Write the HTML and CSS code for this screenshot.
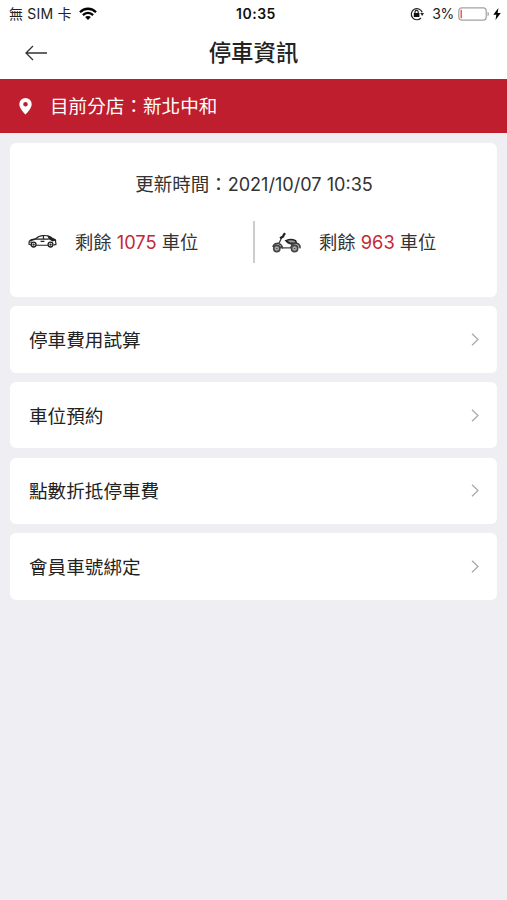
FILE: index.html
```html
<!DOCTYPE html>
<html lang="zh-Hant">
<head>
<meta charset="utf-8">
<meta name="viewport" content="width=device-width, initial-scale=1">
<title>停車資訊</title>
<link rel="stylesheet" href="styles.css">
</head>
<body>
<header class="top">
  <div class="status">
    <div class="status-left">
      <span>無 SIM 卡</span>
      <svg class="wifi" width="18" height="14" viewBox="0 0 18 14" fill="none" stroke="#000" stroke-width="2.3"><path d="M1 5.200C5.400.6 12.600.6 17 5.200M3.900 8.100c2.800-2.900 7.400-2.900 10.200 0"/><path d="M9 13 6.100 10.100c1.600-1.600 4.200-1.600 5.800 0Z" fill="#000" stroke="none"/></svg>
    </div>
    <time class="clock">10:35</time>
    <div class="status-right">
      <svg class="lock" width="14" height="14" viewBox="0 0 14 14" fill="none" stroke="#222"><path d="M12.200 5.300A5.600 5.600 0 1 0 11 11" stroke-width="1.200"/><path d="M10.200 6h3.800l-1.800 2.900Z" fill="#222" stroke="none"/><path d="M5 6.500V5a1.600 1.600 0 0 1 3.200 0v1.500" stroke-width="1.200"/><rect x="3.800" y="6" width="5.600" height="4.100" rx=".5" fill="#111" stroke="none"/></svg>
      <span class="percent">3%</span>
      <svg class="battery" width="32" height="14" viewBox="0 0 32 14"><rect x=".8" y=".8" width="27.400" height="12.400" rx="3" fill="#fff" stroke="#a2a2a2" stroke-width="1.200"/><path d="M3.200 2.800v8.400" stroke="#f0524b" stroke-width="1.400"/><path d="M29.600 4.500q2.400 2.500 0 5Z" fill="#888"/></svg>
      <svg class="bolt" width="8" height="12" viewBox="0 0 8 12"><path d="M5.400 0 .3 6.700h3L2.500 12 7.800 5H4.600Z" fill="#000"/></svg>
    </div>
  </div>
  <div class="nav">
    <svg class="back" width="22" height="16" viewBox="0 0 22 16" fill="none" stroke="#333" stroke-width="1.300"><path d="M8 1 1 8l7 7M1 8h21"/></svg>
    <h1>停車資訊</h1>
  </div>
</header>
<div class="branch">
  <svg class="pin" width="13" height="17" viewBox="0 0 13 17"><path fill="#fff" fill-rule="evenodd" d="M6.500 0A6.200 6.200 0 0 0 .3 6.300C.3 10.800 6.500 16.500 6.500 16.500s6.200-5.700 6.200-10.200A6.200 6.200 0 0 0 6.500 0Zm0 4a2.300 2.300 0 1 1 0 4.600 2.300 2.300 0 0 1 0-4.600Z"/></svg>
  <span>目前分店：新北中和</span>
</div>
<main>
  <section class="card info">
    <p class="updated">更新時間：<span>2021/10/07 10:35</span></p>
    <div class="spaces">
      <div class="space">
        <svg width="29" height="14" viewBox="0 0 30 14" fill="none" stroke="#222" stroke-width="1.200"><path d="M3.300 11.200 1 10.300 1.200 7.500C2 5.800 4.500 5.200 7.800 4.800 10 2.500 12 1.500 16 1.300c4-.2 7 .8 9.500 3.200l2.700 1.200.8 4.800-2.500.8M8.200 11.400h12.500"/><path d="M8 5h13.500M16 1.500V5M3 6.400 7.800 5" stroke-width="1.300"/><path d="m21 2.200 7 3.900-2.500.7L22 4.800Z" fill="#222"/><path d="M13 7.400h4M1.500 8h2.500"/><circle cx="5.800" cy="10.700" r="2.500" stroke-width="1.400"/><circle cx="5.800" cy="10.700" r=".6"/><circle cx="23.300" cy="10.700" r="2.500" stroke-width="1.400"/><circle cx="23.300" cy="10.700" r=".6"/></svg>
        <p>剩餘 <b>1075</b> 車位</p>
      </div>
      <div class="space space-scooter">
        <svg width="29" height="21" viewBox="0 0 29 21" fill="none" stroke="#444" stroke-width="1.300"><path d="M9.500 6 7 11.500l3.500 4.300H19l1-3.300-4-1.500L14 9" fill="#fff"/><path d="M8 6.300 12 4M11 4l2-2.800" stroke="#222" stroke-width="2.200"/><path d="M14 8.600q5-2 9.500 0l1 2.400-6.500.3Z" fill="#999" stroke="#222" stroke-width="1.500"/><path d="M19 15.500q1.500-5 6.500-4 3 1.500 2.500 4.800" fill="#bbb" stroke-width="1.500"/><path d="M1 14.300q1.500-3.300 5.500-3 3.500 1 4 4.500Z" fill="#bbb" stroke-width="1.400"/><circle cx="4.800" cy="16.500" r="3.100" fill="#aaa" stroke-width="1.600"/><circle cx="22.600" cy="16.500" r="3.100" fill="#aaa" stroke-width="1.600"/><path d="M4.800 16v1M22.600 16v1"/></svg>
        <p>剩餘 <b>963</b> 車位</p>
      </div>
    </div>
  </section>
  <a class="card row"><span>停車費用試算</span><svg width="8" height="13" viewBox="0 0 8 13"><path d="m1 .7 6 5.800-6 5.800"/></svg></a>
  <a class="card row"><span>車位預約</span><svg width="8" height="13" viewBox="0 0 8 13"><path d="m1 .7 6 5.800-6 5.800"/></svg></a>
  <a class="card row"><span>點數折抵停車費</span><svg width="8" height="13" viewBox="0 0 8 13"><path d="m1 .7 6 5.800-6 5.800"/></svg></a>
  <a class="card row"><span>會員車號綁定</span><svg width="8" height="13" viewBox="0 0 8 13"><path d="m1 .7 6 5.800-6 5.800"/></svg></a>
</main>
</body>
</html>
```
FILE: styles.css
```css
* { box-sizing: border-box; }
body {
  margin: 0;
  min-height: 900px;
  background: #eeeef3;
  color: #333;
  font-family: Inter, "Noto Sans CJK TC", sans-serif;
}
svg { display: block; flex: none; }
h1, p { margin: 0; }
.top { height: 79px; background: #fff; }
.status {
  display: grid;
  grid-template-columns: 1fr auto 1fr;
  align-items: center;
  height: 27px;
  padding: 0 6px 0 9px;
  color: #222;
  font-size: 14px;
  line-height: 27px;
}
.status-left, .status-right { display: flex; align-items: center; }
.status-left { gap: 7px; letter-spacing: .2px; }
.status-right { justify-content: flex-end; }
.bolt { margin-left: 3px; }
.clock { padding-left: 2px; color: #111; font-weight: 600; letter-spacing: .5px; }
.percent { margin: 0 4px 0 8px; letter-spacing: -.3px; }
.nav {
  display: grid;
  grid-template-columns: 1fr auto 1fr;
  align-items: center;
  height: 50px;
  padding: 0 25px;
}
h1 { padding-top: 1px; color: #222; font-size: 22.4px; line-height: 50px; font-weight: 500; }
.branch {
  display: flex;
  align-items: center;
  gap: 18px;
  height: 54px;
  padding-left: 19px;
  background: #be1e2d;
  color: #fff;
  font-size: 18.6px;
  line-height: 54px;
}
main { display: grid; gap: 9.5px; padding: 9.9px 10px 0; }
.card { border-radius: 6px; background: #fff; }
.info { height: 154px; padding-top: 27px; }
.updated { padding-left: 1px; font-size: 18.5px; line-height: 28px; text-align: center; }
.updated span { font-size: 18.1px; }
.spaces {
  display: grid;
  grid-template-columns: 243px 1fr;
  height: 42px;
  margin-top: 23px;
}
.space { display: flex; align-items: center; gap: 18px; padding-left: 18px; font-size: 18.3px; line-height: 42px; white-space: nowrap; }
.space svg { margin-top: -1px; }
.space-scooter { border-left: 2px solid #ccc; }
.space-scooter svg { margin: 1px 0 0 -1px; }
.space b { color: #c42837; font-weight: 400; }
.row {
  display: flex;
  align-items: center;
  justify-content: space-between;
  height: 66.2px;
  padding: 0 18px 0 19px;
  color: #222;
  font-size: 18.6px;
}
.row span { margin-top: -2px; }
.row path { fill: none; stroke: #aaa; stroke-width: 1.3; }
```
